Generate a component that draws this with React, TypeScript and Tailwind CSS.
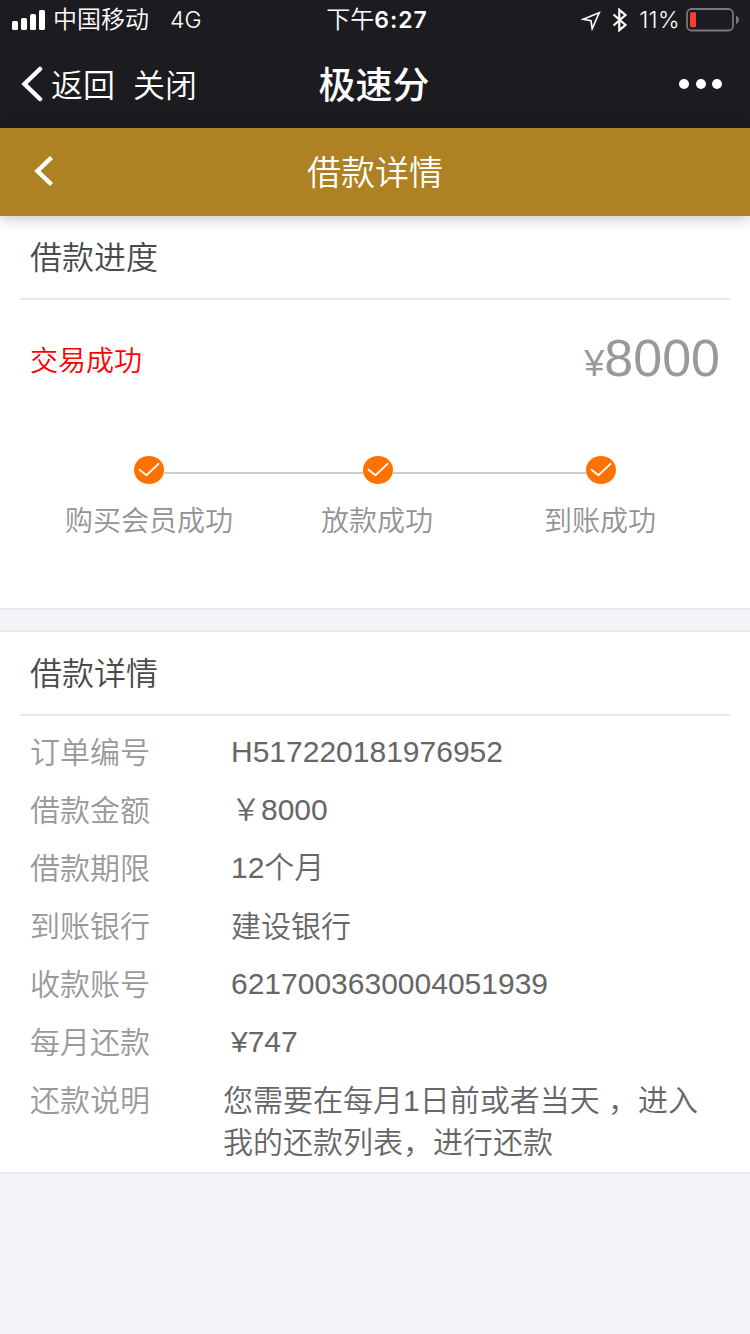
import { Fragment } from 'react';

type DetailRow = {
  label: string;
  value: string;
  valueClassName: string;
};

const steps = [
  { label: '购买会员成功', lineClassName: 'w-[199px]' },
  { label: '放款成功', lineClassName: 'w-[193px]' },
  { label: '到账成功' },
];

const details: DetailRow[] = [
  { label: '订单编号', value: 'H517220181976952', valueClassName: 'pl-2' },
  { label: '借款金额', value: '￥8000', valueClassName: 'pl-2' },
  { label: '借款期限', value: '12个月', valueClassName: 'pl-2' },
  { label: '到账银行', value: '建设银行', valueClassName: 'pt-px pl-2 -mb-px' },
  { label: '收款账号', value: '6217003630004051939', valueClassName: 'pl-2' },
  { label: '每月还款', value: '¥747', valueClassName: 'pl-2' },
  { label: '还款说明', value: '您需要在每月1日前或者当天 ，进入我的还款列表，进行还款', valueClassName: 'pt-px -mb-px' },
];

function StatusBar() {
  return (
    <div className="grid h-10 grid-cols-3 items-center font-['Inter','Noto_Sans_CJK_SC',sans-serif] text-[22px] leading-10">
      <div className="flex items-center pl-3">
        <svg width="34" height="20" viewBox="0 0 34 20" fill="currentColor">
          <rect x="0" y="11" width="6" height="9" rx="1.5" />
          <rect x="9" y="8" width="6" height="12" rx="1.5" />
          <rect x="18" y="4" width="6" height="16" rx="1.5" />
          <rect x="27" y="0" width="6" height="20" rx="1.5" />
        </svg>
        <span className="ml-[7px] text-2xl leading-10">中国移动</span>
        <span className="ml-[21px] text-[23px]">4G</span>
      </div>
      <div className="pl-1 text-center whitespace-nowrap">
        <span className="text-2xl leading-10">下午</span>
        <span className="text-[23px] font-semibold tracking-[1px]">6:27</span>
      </div>
      <div className="flex items-center justify-end pr-2.5">
        <svg className="mt-0.5 mr-px" width="20" height="20" viewBox="0 0 20 20" fill="none" stroke="currentColor" strokeWidth="1.6">
          <path d="M18.200 1.800 2 8.300l8 1.400 1.200 8Z" />
        </svg>
        <svg className="ml-2.5" width="16" height="24" viewBox="0 0 16 24" fill="none" stroke="currentColor" strokeWidth="2.2">
          <path d="m1.500 6.500 12 10.500-6.200 5.200V1.800L13.500 7 1.500 17.500" />
        </svg>
        <span className="ml-[11px] text-[23px] tracking-[0.4px]">11%</span>
        <svg className="ml-1.5" width="54" height="24" viewBox="0 0 54 24">
          <rect x="1" y="1" width="46" height="21.500" rx="4.500" fill="none" stroke="#77777a" strokeWidth="1.8" />
          <rect x="4" y="4.300" width="6" height="15" rx="1" fill="#ff3b30" />
          <path d="M50 7.500c4 1.500 4 7 0 8.500Z" fill="#77777a" />
        </svg>
      </div>
    </div>
  );
}

function NavBar() {
  return (
    <div className="grid h-22 grid-cols-3 items-center">
      <div className="flex items-center pl-[21px] text-[32px] leading-none">
        <svg width="22" height="36" viewBox="0 0 22 36" fill="none" stroke="currentColor" strokeWidth="4.500" strokeLinecap="round">
          <path d="M19 3 3.500 18 19 33" />
        </svg>
        <span className="mt-1 ml-2">返回</span>
        <span className="mt-1 ml-[18px]">关闭</span>
      </div>
      <h1 className="pt-[5px] pr-0.5 text-center text-[37px] leading-none font-medium">极速分</h1>
      <div className="flex justify-end gap-[6.500px] pr-7">
        <span className="size-2.5 rounded-full bg-white" />
        <span className="size-2.5 rounded-full bg-white" />
        <span className="size-2.5 rounded-full bg-white" />
      </div>
    </div>
  );
}

function PageHeader() {
  return (
    <header className="z-10 grid h-22 grid-cols-[1fr_auto_1fr] items-center bg-[#ae8122] text-white shadow-[0_2px_14px_rgba(0,0,0,0.25)]">
      <svg className="-mt-0.5 ml-[34px]" width="20" height="32" viewBox="0 0 20 32" fill="none" stroke="currentColor" strokeWidth="4.500">
        <path d="M17.500 2.500 3.500 16l14 13.500" />
      </svg>
      <h2 className="pt-0.5 text-[34px] leading-none">借款详情</h2>
    </header>
  );
}

function SectionTitle({ children }: { children: string }) {
  return (
    <h3 className="mx-5 h-[84px] border-b-2 border-[#e8e8e8] pl-2.5 text-[32px] leading-[84px] text-[#4a4a4a]">
      {children}
    </h3>
  );
}

function StepIcon() {
  return (
    <svg width="30" height="28" viewBox="0 0 30 28">
      <ellipse cx="15" cy="14" rx="15" ry="14" fill="#ff7200" />
      <path d="m5.500 13.800 7 5.400L24.500 7.800" fill="none" stroke="#fff" strokeWidth="1.8" strokeLinecap="round" />
    </svg>
  );
}

function LoanProgress() {
  return (
    <section className="h-[394px] border-b-2 border-[#e6e6e6] bg-white">
      <SectionTitle>借款进度</SectionTitle>
      <div className="flex h-[120px] items-center justify-between px-[30px]">
        <span className="pt-1 text-[28px] text-[#ff0000]">交易成功</span>
        <span className="pb-[5px] text-4xl leading-none text-[#999]">
          ¥<span className="text-[52px]">8000</span>
        </span>
      </div>
      <div className="mt-9 flex pl-[134px]">
        {steps.map((step) => (
          <Fragment key={step.label}>
            <StepIcon />
            {step.lineClassName && <div className={`mt-4 h-0.5 bg-[#ccc] ${step.lineClassName}`} />}
          </Fragment>
        ))}
      </div>
      <div className="mt-[18px] grid grid-cols-[256px_223px_112px] pl-[65px] text-[28px] leading-10 text-[#929297]">
        {steps.map((step) => (
          <span key={step.label}>{step.label}</span>
        ))}
      </div>
    </section>
  );
}

function LoanDetails() {
  return (
    <section className="mt-5 border-y-2 border-[#e6e6e6] bg-white pb-[9px]">
      <SectionTitle>借款详情</SectionTitle>
      <dl className="flex flex-col gap-4 pt-[15px] pr-[46px] pl-[30px] text-3xl leading-[42px]">
        {details.map(({ label, value, valueClassName }) => (
          <div key={label} className="grid grid-cols-[193px_1fr]">
            <dt className="-mb-px pt-px text-[#999]">{label}</dt>
            <dd className={`text-[#666] ${valueClassName}`}>{value}</dd>
          </div>
        ))}
      </dl>
    </section>
  );
}

export default function App() {
  return (
    <div className="flex h-[1334px] w-[750px] flex-col overflow-hidden bg-[#f3f3f8] font-['Liberation_Sans','Noto_Sans_CJK_SC',sans-serif] font-[350]">
      <div className="bg-[#1c1b20] text-white">
        <StatusBar />
        <NavBar />
      </div>
      <PageHeader />
      <LoanProgress />
      <LoanDetails />
    </div>
  );
}
